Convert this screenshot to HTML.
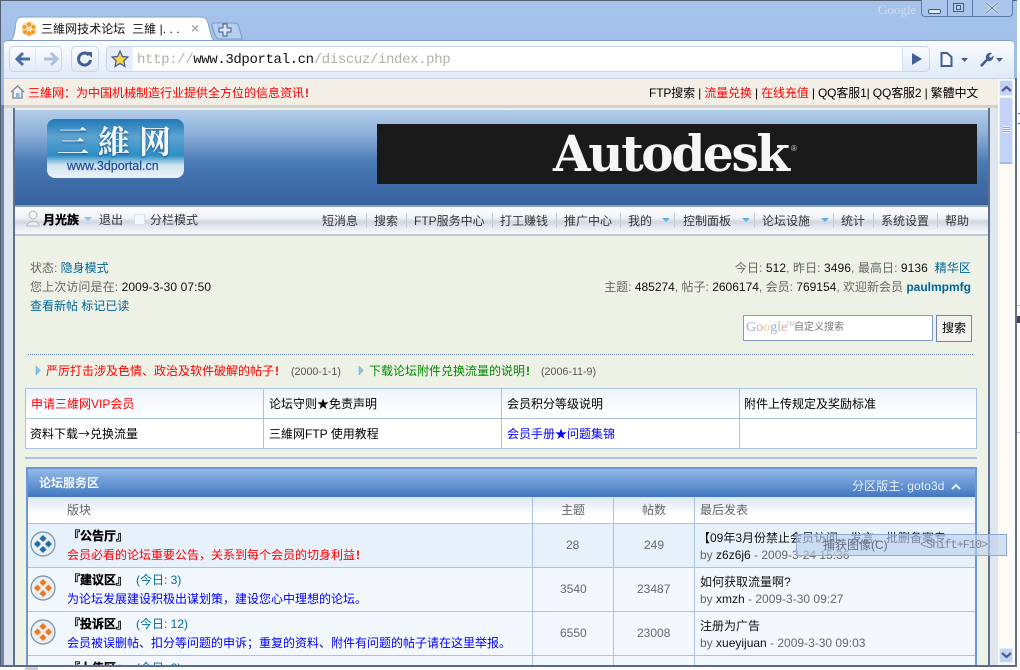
<!DOCTYPE html>
<html><head><meta charset="utf-8"><style>
html,body{margin:0;padding:0;width:1020px;height:670px;overflow:hidden;background:#fff}
body{position:relative;font:12px/16px "Liberation Sans","WenQuanYi Zen Hei","Noto Sans CJK SC",sans-serif;color:#000}
.a{position:absolute}
.t{position:absolute;white-space:nowrap;line-height:16px}
.g{color:#666}.b{color:#069}.r{color:#f00}.u{color:#00f}.d{color:#333}
.h{font-weight:bold;-webkit-text-stroke:.35px #000}
.x{font-weight:bold;margin-left:1px}
.sep{position:absolute;width:1px;height:15px;top:213px;background:#c3ccd6}
.arr{position:absolute;width:0;height:0;border:4px solid transparent;border-top:4px solid #5ab0e6;border-bottom:0;top:218px}
</style></head><body>
<!-- window frame -->
<div class="a" style="left:0;top:0;width:1017px;height:667px;background:linear-gradient(#a6c3ea,#98b9e6 120px);border:1px solid #555f70;border-width:1px 0 0 1px;box-sizing:border-box"></div>
<div class="a" style="left:0;top:665px;width:1017px;height:2px;background:#5b6a85"></div>
<div class="a" style="left:1015px;top:78px;width:2px;height:589px;background:#5e7290"></div>
<div class="a" style="left:1018px;top:113px;width:2px;height:1px;background:#2a6a2a"></div>
<div class="a" style="left:1018px;top:123px;width:2px;height:1px;background:#2a6a2a"></div>
<div class="a" style="left:1017px;top:305px;width:3px;height:1px;background:#bbb"></div>
<div class="a" style="left:1017px;top:316px;width:3px;height:7px;background:#444"></div>
<div class="a" style="left:1017px;top:432px;width:3px;height:1px;background:#bbb"></div>
<div class="a" style="left:25px;top:667px;width:13px;height:3px;background:#ccc"></div>
<!-- titlebar -->
<div class="t" style="left:878px;top:2px;font:13px/16px 'Liberation Serif',serif;color:#cfdcf0">Google</div>
<div class="a" style="left:921px;top:0;width:92px;height:17px;border:1px solid #5a7aa8;border-top:0;border-radius:0 0 4px 4px;box-sizing:border-box;background:#a9c5ec"></div>
<div class="a" style="left:972px;top:0;width:1px;height:17px;background:#5a7aa8"></div>
<div class="a" style="left:947px;top:0;width:1px;height:17px;background:#5a7aa8"></div>
<div class="a" style="left:928px;top:9px;width:11px;height:3px;border:1px solid #44597c;border-radius:2px;background:#dfe9f7"></div>
<div class="a" style="left:953px;top:3px;width:11px;height:9px;border:1px solid #44597c;box-sizing:border-box;background:#b9d0f0"></div>
<div class="a" style="left:956px;top:5px;width:5px;height:5px;border:1px solid #44597c;box-sizing:border-box"></div>
<svg class="a" style="left:984px;top:2px" width="16" height="12"><path d="M2 1L14 11M14 1L2 11" stroke="#dfe9f7" stroke-width="3"/><path d="M2 1L14 11M14 1L2 11" stroke="#5a7090" stroke-width="1"/></svg>
<!-- tabs -->
<svg class="a" style="left:5px;top:15px" width="240" height="27"><path d="M0 26H3C8 26 9 20 10 15L11 7C12 3 14 2 18 2H195C200 2 202 4 203 8L206 20C207 24 209 26 214 26" fill="#fff" stroke="#8ba5ca"/><path d="M209 8H229C232 8 233 9 234 12L237 24H214C212 24 211 22 210 20L207 11C207 9 207 8 209 8Z" fill="#b5cdee" stroke="#7f9ac2"/></svg>
<svg class="a" style="left:218px;top:23px" width="14" height="14"><path d="M5 1H9V5H13V9H9V13H5V9H1V5H5Z" fill="#dce8f8" stroke="#3d5a85"/></svg>
<svg class="a" style="left:21px;top:21px" width="16" height="16"><circle cx="8" cy="8" r="7.5" fill="#f4e3bd"/><g fill="#f39a1e"><circle cx="8" cy="3.500" r="2.200"/><circle cx="8" cy="12.500" r="2.200"/><circle cx="3.500" cy="6" r="2"/><circle cx="12.500" cy="6" r="2"/><circle cx="4" cy="11" r="2"/><circle cx="12" cy="11" r="2"/></g></svg>
<div class="t" style="left:41px;top:21px;color:#111;letter-spacing:.05px">三維网技术论坛&nbsp;&nbsp;三維 |. . .</div>
<div class="t" style="left:191px;top:20px;color:#aaa;font-weight:bold;font-size:14px">×</div>
<!-- toolbar -->
<div class="a" style="left:4px;top:40px;width:1010px;height:38px;background:linear-gradient(#fafcff,#dfe9f8);border-radius:4px 4px 0 0;border-top:1px solid #7f9cc4;box-sizing:border-box"></div>
<div class="a" style="left:9px;top:46px;width:53px;height:26px;border:1px solid #c8d5e9;border-radius:5px;background:linear-gradient(#fbfcff,#e3ebf8);box-sizing:border-box"></div>
<div class="a" style="left:35px;top:47px;width:1px;height:24px;background:#dde6f3"></div>
<svg class="a" style="left:14px;top:51px" width="46" height="16"><path d="M9 2L3 8L9 14M3 8H16" fill="none" stroke="#4a6ea8" stroke-width="3"/><path d="M37 2L43 8L37 14M43 8H30" fill="none" stroke="#aebfdc" stroke-width="3"/></svg>
<div class="a" style="left:71px;top:46px;width:28px;height:26px;border:1px solid #c8d5e9;border-radius:5px;background:linear-gradient(#fbfcff,#e3ebf8);box-sizing:border-box"></div>
<svg class="a" style="left:76px;top:51px" width="18" height="16"><path d="M13 4A6 6 0 1 0 14.500 9" fill="none" stroke="#3e5f96" stroke-width="3"/><path d="M10 1L16 1L16 7Z" fill="#3e5f96"/></svg>
<div class="a" style="left:106px;top:46px;width:144px;height:26px;border:1px solid #c8d5e9;border-radius:5px 0 0 5px;background:#e8eef9;box-sizing:border-box"></div>
<div class="a" style="left:133px;top:46px;width:770px;height:26px;border:1px solid #c8d5e9;border-left:0;background:#fff;box-sizing:border-box"></div>
<div class="a" style="left:902px;top:46px;width:28px;height:26px;border:1px solid #c8d5e9;border-left:1px solid #d5dfee;border-radius:0 5px 5px 0;background:linear-gradient(#fbfcff,#e3ebf8);box-sizing:border-box"></div>
<svg class="a" style="left:111px;top:50px" width="18" height="18"><path d="M9 1L11.400 6.500L17 7L12.800 10.800L14 16.500L9 13.500L4 16.500L5.200 10.800L1 7L6.600 6.500Z" fill="#f6d84a" stroke="#44598a" stroke-width="1.200"/></svg>
<div class="t" style="left:137px;top:52px;font:14px/16px 'Liberation Mono',monospace;letter-spacing:-.37px;color:#b0b0a8">http://<span style="color:#111">www.3dportal.cn</span>/discuz/index.php</div>
<svg class="a" style="left:911px;top:53px" width="12" height="12"><path d="M1 0L11 6L1 12Z" fill="#3f5f96"/></svg>
<svg class="a" style="left:940px;top:52px" width="28" height="15"><path d="M1.500 1H7L11.500 5V14H1.500Z" fill="#f4f7fd" stroke="#3f5f96" stroke-width="2"/><path d="M21 6H28L24.500 10Z" fill="#3f5f96"/></svg>
<svg class="a" style="left:978px;top:52px" width="28" height="15"><path d="M2 13L8 7C7 3 10 0 14 1L11 4L12.500 6L15.500 3.500C16 7 13 10 9.500 9L4 15Z" fill="#3f5f96"/><path d="M18 6H25L21.500 10Z" fill="#3f5f96"/></svg>
<!-- info bar -->
<div class="a" style="left:4px;top:78px;width:1011px;height:27px;background:#f3efe7;border-top:1px solid #c9d3e2;box-sizing:border-box"></div>
<div class="a" style="left:4px;top:105px;width:994px;height:3px;background:#d4d2ce"></div>
<svg class="a" style="left:10px;top:85px" width="15" height="14"><path d="M1 7L7.500 1L14 7M3 6V13H12V6" fill="#eef2f6" stroke="#7a8692" stroke-width="1.300"/><rect x="6" y="8" width="3.500" height="4" fill="#8fb4d8"/></svg>
<div class="t r" style="left:28px;top:85px">三維网：为中国机械制造行业提供全方位的信息资讯<span class="x">!</span></div>
<div class="t" style="left:649px;top:85px;letter-spacing:-.14px">FTP搜索 | <span class="r">流量兑换</span> | <span class="r">在线充值</span> | QQ客服1| QQ客服2 | 繁體中文</div>
<!-- scrollbar -->
<div class="a" style="left:998px;top:79px;width:17px;height:586px;background:#fbfaf5"></div>
<div class="a" style="left:999px;top:80px;width:14px;height:16px;background:#c3d3f8;border:1px solid #e8eefc;box-sizing:border-box;border-radius:2px"></div>
<svg class="a" style="left:1001px;top:85px" width="11" height="7"><path d="M1 6L5.500 2L10 6" fill="none" stroke="#4d6185" stroke-width="2.200"/></svg>
<div class="a" style="left:999px;top:97px;width:14px;height:67px;background:#c3d3f8;border:1px solid #e8eefc;border-bottom:2px solid #a6b9e8;box-sizing:border-box;border-radius:2px"></div>
<div class="a" style="left:1003px;top:126px;width:6px;height:7px;background:repeating-linear-gradient(#eef3ff 0 1px,#8ea5dc 1px 2px)"></div>
<div class="a" style="left:999px;top:648px;width:14px;height:15px;background:#c3d3f8;border:1px solid #e8eefc;box-sizing:border-box;border-radius:2px"></div>
<svg class="a" style="left:1001px;top:652px" width="11" height="7"><path d="M1 1L5.500 5L10 1" fill="none" stroke="#4d6185" stroke-width="2.200"/></svg>
<!-- page gutter -->
<div class="a" style="left:1px;top:105px;width:3px;height:560px;background:#6d87b5"></div>
<div class="a" style="left:4px;top:108px;width:9px;height:557px;background:#dfe6f0"></div>
<div class="a" style="left:13px;top:108px;width:2px;height:557px;background:#5e7290"></div>
<div class="a" style="left:988px;top:108px;width:2px;height:557px;background:#5e7290"></div>
<div class="a" style="left:990px;top:108px;width:8px;height:557px;background:#dfe6f0"></div>
<div class="a" style="left:15px;top:108px;width:973px;height:557px;background:#eef1e6"></div>
<!-- banner -->
<div class="a" style="left:15px;top:110px;width:973px;height:95px;background:linear-gradient(#b3cde9 0,#8eb0da 25%,#4a7bb5 55%,#3f6da9 75%,#37619c 100%)"></div>
<div class="a" style="left:47px;top:119px;width:137px;height:59px;border-radius:8px;background:linear-gradient(#1f78b8 0,#5ea3cf 30%,#2d8fc6 62%,#cfe3ef 78%,#edf3f8 100%);overflow:hidden"></div>
<div class="t" style="left:57px;top:122px;font:bold 32px/36px 'WenQuanYi Zen Hei','Noto Serif CJK SC',serif;color:#f3f7fb;letter-spacing:9px;text-shadow:0 1px 2px #0b4f88">三維网</div>
<div class="t" style="left:67px;top:159px;font:12.500px/14px 'Liberation Sans',sans-serif;color:#1c4a96;-webkit-text-stroke:.2px #1c4a96">www.3dportal.cn</div>
<div class="a" style="left:377px;top:124px;width:600px;height:60px;background:#1a1a1a"></div>
<div class="t" style="left:553px;top:123px;font:bold 50px/62px 'DejaVu Serif','Liberation Serif',serif;color:#f6f6f6;letter-spacing:-2.400px;transform-origin:0 50%;transform:scaleX(.97)">Autodesk</div>
<div class="t" style="left:791px;top:144px;font:8px/10px 'Liberation Sans',sans-serif;color:#ddd">®</div>
<!-- nav -->
<div class="a" style="left:15px;top:205px;width:973px;height:2px;background:#8da3bd"></div>
<div class="a" style="left:15px;top:207px;width:973px;height:27px;background:linear-gradient(#fdfdfe 0,#f1f3f7 40%,#cfd7e0 55%,#e6ebf0 75%,#f7f8fa 100%)"></div>
<div class="a" style="left:15px;top:234px;width:973px;height:2px;background:#b8c6d6"></div>
<svg class="a" style="left:26px;top:210px" width="14" height="17"><circle cx="7" cy="5" r="4" fill="#f4f4f4" stroke="#b5b5b5"/><path d="M1 16C1 10 13 10 13 16Z" fill="#eee" stroke="#b5b5b5"/></svg>
<div class="t h" style="left:43px;top:212px">月光族</div>
<div class="arr" style="left:84px;top:217px;border-top-color:#8fc3e6"></div>
<div class="t d" style="left:99px;top:212px">退出</div>
<div class="a" style="left:134px;top:214px;width:11px;height:11px;background:#f6f9fd;border:1px solid #d8e0ea;box-sizing:border-box"></div>
<div class="t d" style="left:150px;top:212px">分栏模式</div>
<div class="t d" style="left:322px;top:213px">短消息</div>
<div class="t d" style="left:374px;top:213px">搜索</div>
<div class="t d" style="left:414px;top:213px">FTP服务中心</div>
<div class="t d" style="left:500px;top:213px">打工赚钱</div>
<div class="t d" style="left:564px;top:213px">推广中心</div>
<div class="t d" style="left:628px;top:213px">我的</div>
<div class="t d" style="left:683px;top:213px">控制面板</div>
<div class="t d" style="left:762px;top:213px">论坛设施</div>
<div class="t d" style="left:841px;top:213px">统计</div>
<div class="t d" style="left:881px;top:213px">系统设置</div>
<div class="t d" style="left:945px;top:213px">帮助</div>
<div class="sep" style="left:366px"></div><div class="sep" style="left:406px"></div><div class="sep" style="left:492px"></div><div class="sep" style="left:556px"></div><div class="sep" style="left:620px"></div><div class="sep" style="left:674px"></div><div class="sep" style="left:754px"></div><div class="sep" style="left:833px"></div><div class="sep" style="left:873px"></div><div class="sep" style="left:937px"></div>
<div class="arr" style="left:662px"></div><div class="arr" style="left:742px"></div><div class="arr" style="left:821px"></div>
<!-- info -->
<div class="t g" style="left:30px;top:260px">状态: <span class="b">隐身模式</span></div>
<div class="t g" style="left:30px;top:279px;letter-spacing:.1px">您上次访问是在: <span style="color:#111">2009-3-30 07:50</span></div>
<div class="t b" style="left:30px;top:298px">查看新帖 标记已读</div>
<div class="t g" style="right:49px;top:260px;letter-spacing:.08px">今日: <span style="color:#111">512</span>, 昨日: <span style="color:#111">3496</span>, 最高日: <span style="color:#111">9136</span> &nbsp;<span class="b">精华区</span></div>
<div class="t g" style="right:49px;top:279px">主题: <span style="color:#111">485274</span>, 帖子: <span style="color:#111">2606174</span>, 会员: <span style="color:#111">769154</span>, 欢迎新会员 <b class="b">paulmpmfg</b></div>
<div class="a" style="left:743px;top:315px;width:190px;height:26px;background:#fff;border:1px solid #7f9ac6;box-sizing:border-box"></div>
<div class="t" style="left:746px;top:320px;font:14px/16px 'Liberation Serif',serif;-webkit-text-stroke:.2px"><span style="color:#a9bbdc">G</span><span style="color:#e3b3ad">o</span><span style="color:#ecd9a3">o</span><span style="color:#a9bbdc">g</span><span style="color:#b3d3b0">l</span><span style="color:#e3b3ad">e</span></div>
<div class="t" style="left:786px;top:317px;font-size:6px;color:#bbb">TM</div>
<div class="t" style="left:794px;top:320px;font-size:10px;color:#777">自定义搜索</div>
<div class="a" style="left:936px;top:315px;width:36px;height:27px;background:#f2f1ee;border:1px solid #6f86a8;box-sizing:border-box"></div>
<div class="t" style="left:942px;top:320px">搜索</div>
<div class="a" style="left:28px;top:354px;width:946px;height:1px;background:repeating-linear-gradient(90deg,#6d8fc8 0 1px,transparent 1px 2px)"></div>
<!-- announcements -->
<svg class="a" style="left:35px;top:366px" width="6" height="9"><path d="M1 0L5.500 4.500L1 9Z" fill="#8fc4ea" stroke="#5a9fd6" stroke-width=".5"/></svg>
<div class="t r" style="left:46px;top:363px">严厉打击涉及色情、政治及软件破解的帖子<span class="x">!</span></div>
<div class="t" style="left:291px;top:364px;font-size:10.700px;color:#555">(2000-1-1)</div>
<svg class="a" style="left:358px;top:366px" width="6" height="9"><path d="M1 0L5.500 4.500L1 9Z" fill="#8fc4ea" stroke="#5a9fd6" stroke-width=".5"/></svg>
<div class="t" style="left:369px;top:363px;color:#080">下载论坛附件兑换流量的说明<span class="x">!</span></div>
<div class="t" style="left:541px;top:364px;font-size:10.700px;color:#555">(2006-11-9)</div>
<!-- link table -->
<div class="a" style="left:25px;top:388px;width:952px;height:61px;background:#fff;border:1px solid #a9c2e4;box-sizing:border-box"></div>
<div class="a" style="left:26px;top:389px;width:950px;height:29px;background:linear-gradient(#eef5fd,#fff)"></div>
<div class="a" style="left:26px;top:418px;width:950px;height:1px;background:#a9c2e4"></div>
<div class="a" style="left:263px;top:389px;width:1px;height:59px;background:#a9c2e4"></div>
<div class="a" style="left:501px;top:389px;width:1px;height:59px;background:#a9c2e4"></div>
<div class="a" style="left:739px;top:389px;width:1px;height:59px;background:#a9c2e4"></div>
<div class="t r" style="left:31px;top:396px">申请三維网VIP会员</div>
<div class="t" style="left:269px;top:396px">论坛守则★免责声明</div>
<div class="t" style="left:507px;top:396px">会员积分等级说明</div>
<div class="t" style="left:744px;top:396px">附件上传规定及奖励标准</div>
<div class="t" style="left:30px;top:426px">资料下载<span style="font-family:'Noto Sans CJK SC',sans-serif">→</span>兑换流量</div>
<div class="t" style="left:269px;top:426px">三維网FTP 使用教程</div>
<div class="t u" style="left:507px;top:426px">会员手册★问题集锦</div>
<div class="a" style="left:25px;top:457px;width:952px;height:2px;background:#a9c2e4"></div>
<!-- forum -->
<div class="a" style="left:26px;top:467px;width:951px;height:198px;background:#f3f8fe;border:2px solid #6b99d6;border-bottom:0;box-sizing:border-box"></div>
<div class="a" style="left:28px;top:469px;width:947px;height:28px;background:linear-gradient(#93b9e8,#4177c1)"></div>
<div class="t" style="left:39px;top:475px;color:#f4f7fb;font-weight:bold">论坛服务区</div>
<div class="t" style="left:852px;top:478px;color:#e3edf9;letter-spacing:.1px">分区版主: goto3d</div>
<svg class="a" style="left:951px;top:483px" width="10" height="7"><path d="M1 6L5 2L9 6" fill="none" stroke="#e3edf9" stroke-width="2"/></svg>
<div class="a" style="left:28px;top:497px;width:947px;height:26px;background:linear-gradient(#dde7f4,#fff 70%)"></div>
<div class="a" style="left:28px;top:523px;width:947px;height:44px;background:#e6f1fb"></div>
<div class="a" style="left:28px;top:523px;width:947px;height:1px;background:#a9c2e4"></div>
<div class="a" style="left:28px;top:567px;width:947px;height:1px;background:#a9c2e4"></div>
<div class="a" style="left:28px;top:611px;width:947px;height:1px;background:#a9c2e4"></div>
<div class="a" style="left:28px;top:655px;width:947px;height:1px;background:#a9c2e4"></div>
<div class="a" style="left:532px;top:497px;width:1px;height:168px;background:#a9c2e4"></div>
<div class="a" style="left:613px;top:497px;width:1px;height:168px;background:#a9c2e4"></div>
<div class="a" style="left:694px;top:497px;width:1px;height:168px;background:#a9c2e4"></div>
<div class="t g" style="left:67px;top:502px">版块</div>
<div class="t g" style="left:561px;top:502px">主题</div>
<div class="t g" style="left:642px;top:502px">帖数</div>
<div class="t g" style="left:700px;top:502px">最后发表</div>
<!-- row icons -->
<svg class="a" style="left:30px;top:531px" width="26" height="26"><circle cx="13" cy="13" r="12" fill="#eceff2" stroke="#6f90ad" stroke-width="1.200"/><g fill="#1f6ea8"><rect x="10.500" y="5" width="5" height="5" transform="rotate(45 13 7.500)"/><rect x="10.500" y="16" width="5" height="5" transform="rotate(45 13 18.500)"/><rect x="5" y="10.500" width="5" height="5" transform="rotate(45 7.500 13)"/><rect x="16" y="10.500" width="5" height="5" transform="rotate(45 18.500 13)"/></g></svg>
<svg class="a" style="left:30px;top:575px" width="26" height="26"><circle cx="13" cy="13" r="12" fill="#eceff2" stroke="#6f90ad" stroke-width="1.200"/><g fill="#f2761c"><rect x="10.500" y="5" width="5" height="5" transform="rotate(45 13 7.500)"/><rect x="10.500" y="16" width="5" height="5" transform="rotate(45 13 18.500)"/><rect x="5" y="10.500" width="5" height="5" transform="rotate(45 7.500 13)"/><rect x="16" y="10.500" width="5" height="5" transform="rotate(45 18.500 13)"/></g></svg>
<svg class="a" style="left:30px;top:619px" width="26" height="26"><circle cx="13" cy="13" r="12" fill="#eceff2" stroke="#6f90ad" stroke-width="1.200"/><g fill="#f2761c"><rect x="10.500" y="5" width="5" height="5" transform="rotate(45 13 7.500)"/><rect x="10.500" y="16" width="5" height="5" transform="rotate(45 13 18.500)"/><rect x="5" y="10.500" width="5" height="5" transform="rotate(45 7.500 13)"/><rect x="16" y="10.500" width="5" height="5" transform="rotate(45 18.500 13)"/></g></svg>
<!-- rows -->
<div class="t h" style="left:68px;top:528px">『公告厅』</div>
<div class="t r" style="left:67px;top:547px">会员必看的论坛重要公告，关系到每个会员的切身利益<span class="x">!</span></div>
<div class="t g" style="left:566px;top:537px">28</div><div class="t g" style="left:644px;top:537px">249</div>
<div class="t" style="left:698px;top:530px;color:#111">【09年3月份禁止会员访问、发言、批删备案专</div>
<div class="t g" style="left:700px;top:547px">by <span style="color:#111">z6z6j6</span> - 2009-3-24 15:36</div>
<div class="t h" style="left:68px;top:572px">『建议区』</div><div class="t b" style="left:136px;top:572px">(今日: 3)</div>
<div class="t u" style="left:67px;top:591px">为论坛发展建设积极出谋划策，建设您心中理想的论坛。</div>
<div class="t g" style="left:560px;top:581px">3540</div><div class="t g" style="left:637px;top:581px">23487</div>
<div class="t" style="left:700px;top:574px;color:#111">如何获取流量啊?</div>
<div class="t g" style="left:700px;top:591px">by <span style="color:#111">xmzh</span> - 2009-3-30 09:27</div>
<div class="t h" style="left:68px;top:616px">『投诉区』</div><div class="t b" style="left:136px;top:616px">(今日: 12)</div>
<div class="t u" style="left:67px;top:635px">会员被误删帖、扣分等问题的申诉；重复的资料、附件有问题的帖子请在这里举报。</div>
<div class="t g" style="left:560px;top:625px">6550</div><div class="t g" style="left:637px;top:625px">23008</div>
<div class="t" style="left:700px;top:618px;color:#111">注册为广告</div>
<div class="t g" style="left:700px;top:635px">by <span style="color:#111">xueyijuan</span> - 2009-3-30 09:03</div>
<div class="a" style="left:68px;top:661px;width:500px;height:4px;overflow:hidden"><div class="t h" style="left:0;top:-1px">『上传区』</div><div class="t b" style="left:68px;top:-1px">(今日: 8)</div></div>
<!-- capture overlay -->
<div class="a" style="left:796px;top:534px;width:211px;height:22px;background:rgba(188,207,238,.62);border:1px solid #8ea8d8;box-sizing:border-box"></div>
<div class="t" style="left:823px;top:537px;color:#5f6b80">捕获图像(C)</div>
<div class="t" style="left:920px;top:537px;color:#7a879c;font:12px/16px 'Liberation Mono',monospace;letter-spacing:-1.100px">&lt;Shift+F10&gt;</div>
</body></html>
